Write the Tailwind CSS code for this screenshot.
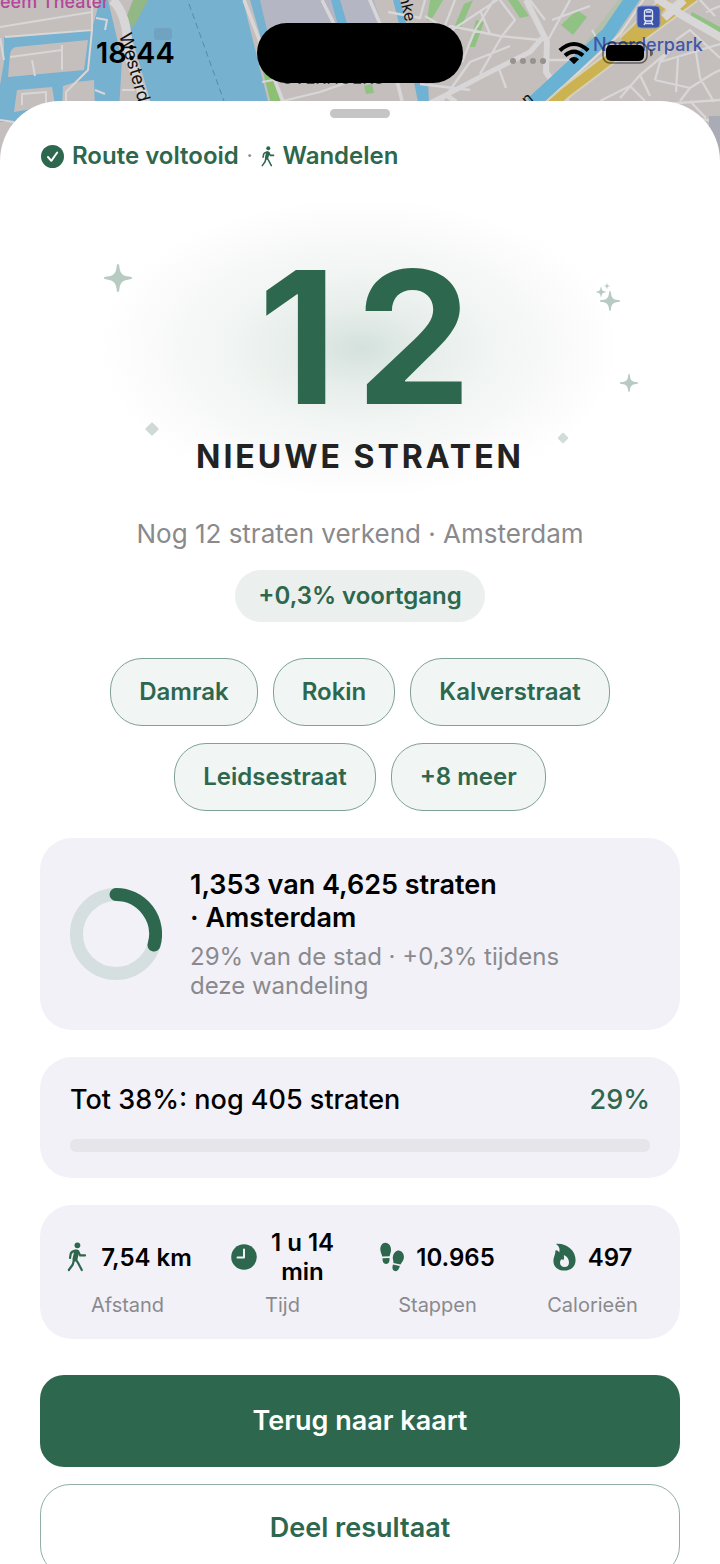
<!DOCTYPE html>
<html lang="nl">
<head>
    <meta charset="UTF-8">
    <meta name="viewport" content="width=device-width, initial-scale=1.0">
    <title>Route voltooid</title>
    <script src="https://cdn.jsdelivr.net/npm/@tailwindcss/browser@4"></script>
</head>
<body class="bg-white font-['Inter','Liberation_Sans',sans-serif] text-black">
    <svg class="hidden" aria-hidden="true">
        <symbol id="walk" viewBox="0 0 20 30">
            <circle cx="10.400" cy="3.300" r="2.900" fill="currentColor"/>
            <path d="M9.600 10L8 17" fill="none" stroke="currentColor" stroke-width="5" stroke-linecap="round"/>
            <path d="M8.600 8.600Q4.600 9.400 3.800 11.500L3 16M11.200 9.500L13.200 13.400H18M8.600 17L11 20.800L14.800 28M6.800 18.500L5.800 22.500L1.800 28" fill="none" stroke="currentColor" stroke-width="2.200" stroke-linecap="round" stroke-linejoin="round"/>
        </symbol>
        <symbol id="spark" viewBox="0 0 28 28">
            <path d="M14 0C15 0 15.2 1 15.4 3C16.2 9.500 18.500 11.800 25 12.600C27 12.800 28 13 28 14C28 15 27 15.200 25 15.400C18.500 16.200 16.200 18.500 15.400 25C15.200 27 15 28 14 28C13 28 12.800 27 12.600 25C11.800 18.500 9.500 16.200 3 15.400C1 15.200 0 15 0 14C0 13 1 12.800 3 12.600C9.500 11.800 11.800 9.500 12.600 3C12.800 1 13 0 14 0Z" fill="currentColor"/>
        </symbol>
    </svg>

    <div class="relative h-screen overflow-hidden">
        <!-- kaart -->
        <svg class="absolute inset-x-0 top-0 w-full h-[170px]" viewBox="0 0 720 170" preserveAspectRatio="xMidYMin slice" font-family="Inter, Liberation Sans, sans-serif">
            <rect width="720" height="170" fill="#77b1d0"/>
            <g fill="#c4bfbd">
                <path d="M0 0H100L92 29L5 37L0 38Z"/>
                <path d="M10 54Q11 48 16 47L88 40L84 70L8 77Z"/>
                <path d="M17 90L52 87L55 105L14 112Z"/>
                <path d="M63 86L76 82L94 80L95 110H62Z"/>
                <path d="M0 38L4 36L4 62L0 85Z"/>
                <path d="M0 122H30V170H0Z"/>
                <path d="M108 0H140L128 24L139 62L153 110H119L122 60Z"/>
                <path d="M243 0H720V170H285Z"/>
            </g>
            <path d="M133 0H148L133 28L126 18Z" fill="#93b885"/>
            <path d="M258 0H374L384 30L345 30L270 45Z" fill="#b4b6c4"/>
            <path d="M250 0H260L274 60L267 60Z" fill="#77b1d0"/>
            <path d="M262 68L270 72L283 108H272Z" fill="#8cc173"/>
            <path d="M331 0H340L352 40H342ZM393 0H400L416 60L428 82L429 102H418L414 82Z" fill="#70b2d4"/>
            <g fill="#8fc283">
                <path d="M430 0H443L433 17L427 21Z"/>
                <path d="M464 4L473 0L460 30L453 30Z"/>
                <path d="M476 20L484 22L475 47L469 47Z"/>
                <path d="M508 0H518L529 16L520 18Z"/>
                <path d="M577 10L587 17L573 35L561 25Z"/>
                <path d="M692 12L720 27V35L690 18Z"/>
                <path d="M364 86L372 84L374 93L366 94Z"/>
                <path d="M618 0H628L600 32L580 50Z" opacity=".3"/>
            </g>
            <!-- straten -->
            <g fill="none" stroke="#d8d6d7" stroke-linejoin="round">
                <path stroke-width="2" d="M0 27L92 12M92 0V30L88 70L66 92V101M5 37L92 30M10 57L62 50M62 45V70M32 60L35 76M22 105V94L46 92V105M0 120L14 122M0 38L4 60M122 90H135M96 18L107 20L105 30M95 90L105 94M262 82L330 70M283 101L320 92L360 78"/>
                <path stroke-width="9" d="M112 0Q122 8 126 28L130 60L146 104"/>
                <path stroke-width="3.500" d="M369 -2L387 40L402 101M322 0L334 24M244 0L284 104"/>
                <path stroke-width="2.300" d="M404 30L440 38L455 0M412 60L450 26L500 36L540 40M440 38L500 -2M462 62L475 30L494 0M480 74L502 36L515 20L500 0M498 66L506 88M420 84L470 90M440 104L470 62L510 46M425 16L455 34M545 60L575 60M548 40L570 0M552 20L590 6M575 60L600 44L592 30M388 12L420 18L425 0M490 34L480 10M655 80L690 88L712 74L720 70M655 80L660 62L720 44M660 62L670 50L640 75L620 98M690 88L680 101M678 58L676 92M696 52L700 78L714 102M640 75L650 96M600 101L630 86L645 101M700 0L715 16M706 12L720 6M676 40L690 30L720 58M720 100L664 104M655 112L720 122M690 101L706 118M530 0L545 20"/>
                <path stroke-width="6" d="M526 0L547 42L546 72L568 104"/>
                <path stroke-width="5" d="M542 38L530 52L488 73L446 95L428 104M445 94L456 102"/>
            </g>
            <path d="M634 -4L608 34L532 104" fill="none" stroke="#69b2d4" stroke-width="14"/>
            <path d="M646 -4L620 34L548 101" fill="none" stroke="#dddbd3" stroke-width="2"/>
            <path d="M668 0L624 42M694 -4L640 36L566 92L548 108" fill="none" stroke="#d5d1bb" stroke-width="14"/>
            <path d="M668 0L624 42M694 -4L640 36L566 92L548 108" fill="none" stroke="#ccb250" stroke-width="10"/>
            <path d="M656 -2L682 15L722 38M664 18L684 0" fill="none" stroke="#d8d6d7" stroke-width="8"/>
            <path d="M709 116H720V170H709Z" fill="#a9abb7"/>
            <path d="M189 4L224 101" stroke="#5989a4" stroke-width="1" stroke-dasharray="6 4"/>
            <rect x="154" y="28" width="18" height="12" rx="3" fill="#6d9db8" opacity=".7"/>

            <text x="0" y="8" font-size="18" font-weight="500" fill="#b3489b">eem Theater</text>
            <text transform="translate(119 35) rotate(74)" font-size="18" fill="#111">Westerdok</text>
            <text transform="translate(399 -4) rotate(76)" font-size="16" fill="#111">nke</text>
            <text x="281" y="84" font-size="17" fill="#3f465c">OVERHOEKS</text>
            <text transform="translate(527 106) rotate(-40)" font-size="16" fill="#111">n</text>
            <text x="593" y="51" font-size="18" font-weight="500" fill="#4057a9">Noorderpark</text>

            <rect x="637" y="6" width="23" height="22" rx="4" fill="#3a52aa" stroke="#8393cc"/>
            <path d="M644.500 19V12Q644.500 9.500 648.500 9.500Q652.500 9.500 652.500 12V19Q652.500 21 650.500 21H646.500Q644.500 21 644.500 19ZM646 12H651M644.500 16H652.500M646 21L644 25M651 21L653 25M645 23.500H652" fill="none" stroke="#dfe4f4" stroke-width="1.400"/>
        </svg>

        <!-- statusbalk -->
        <header class="relative h-[101px] flex items-center justify-between pl-24 pr-[66px] pb-1">
            <time class="pt-2 text-[29px] leading-8 font-semibold">18:44</time>
            <div class="absolute left-1/2 top-[23px] -translate-x-1/2 w-[206px] h-[60px] rounded-full bg-black"></div>
            <div class="flex items-center gap-3 pt-2">
                <svg class="w-9 h-6" viewBox="0 0 36 24" fill="#96928f">
                    <circle cx="3" cy="20" r="3"/><circle cx="13" cy="20" r="3"/><circle cx="23" cy="20" r="3"/><circle cx="33" cy="20" r="3"/>
                </svg>
                <svg class="w-8 h-6" viewBox="0 0 32 24" fill="none" stroke="#000" stroke-width="4">
                    <path d="M1.800 9.500Q16 -3.500 30.200 9.500M7 14.600Q16 6.500 25 14.600"/>
                    <path d="M11 18.300Q16 13.800 21 18.300L16 23.200Z" fill="#000" stroke="none"/>
                </svg>
                <svg class="w-[52px] h-6" viewBox="0 0 52 24">
                    <rect x="1" y="2" width="44" height="20" rx="7" fill="none" stroke="#000" stroke-opacity=".5" stroke-width="1.500"/>
                    <rect x="4" y="4" width="38" height="16" rx="5"/>
                    <path d="M48 8.500Q51 9.500 51 12Q51 14.500 48 15.500Z" opacity=".5"/>
                </svg>
            </div>
        </header>

        <main class="relative rounded-t-[60px] bg-white px-10 pt-2 pb-10">
            <div class="mx-auto w-[60px] h-[9px] rounded-full bg-[#c5c5c6]"></div>

            <div class="mt-5 flex items-center h-9 text-2xl font-semibold text-[#2d674d]">
                <svg class="w-[25px] h-[25px] mr-[7px]" viewBox="0 0 25 25">
                    <circle cx="12.500" cy="12.500" r="11.500" fill="currentColor"/>
                    <path d="M8 13L11.300 16.800L17.200 8.500" fill="none" stroke="#fff" stroke-width="2" stroke-linecap="round" stroke-linejoin="round"/>
                </svg>
                <span>Route voltooid</span>
                <span class="mx-2 text-lg text-[#8a8a8e]">·</span>
                <svg class="w-[14px] h-[21px] mr-2"><use href="#walk"/></svg>
                <span>Wandelen</span>
            </div>

            <section class="relative mt-6 -mx-10 h-[300px] flex flex-col items-center bg-[radial-gradient(260px_150px_at_50%_50%,#d4e1dc_0%,#e6edea_25%,#f1f5f3_50%,#f9faf9_78%,#ffffff_100%)] text-[#2d674d]">
                <p class="mt-[59px] pl-7 text-[184px] leading-[160px] font-bold tracking-widest">12</p>
                <h1 class="mt-5 text-[32px] leading-10 font-bold tracking-[3px] text-[#222222]">NIEUWE STRATEN</h1>
                <svg class="absolute left-[104px] top-[66px] w-7 h-7 text-[#b7cbc2]"><use href="#spark"/></svg>
                <svg class="absolute right-[100px] top-[85px] w-6 h-7 text-[#b7cbc2]" viewBox="0 0 24 28">
                    <use href="#spark" x="4" y="8" width="20" height="20"/>
                    <use href="#spark" x="0" y="4" width="10" height="10"/>
                    <use href="#spark" x="8" y="0" width="6" height="6"/>
                </svg>
                <svg class="absolute right-[82px] top-[176px] w-[18px] h-[18px] text-[#b7cbc2]"><use href="#spark"/></svg>
                <span class="absolute left-[147px] top-[226px] w-[10px] h-[10px] rotate-45 rounded-[1px] bg-[#cfdad5]"></span>
                <span class="absolute right-[153px] top-[236px] w-2 h-2 rotate-45 rounded-[1px] bg-[#d2ddd8]"></span>
            </section>

            <p class="mt-[18px] text-center text-[26px] leading-9 text-[#8a8a8d]">Nog 12 straten verkend · Amsterdam</p>
            <p class="mx-auto mt-[18px] w-fit rounded-full bg-[#ebefee] px-[23px] text-2xl leading-[52px] font-semibold text-[#2d674d]">+0,3% voortgang</p>

            <ul class="mt-9 flex flex-wrap justify-center gap-x-[15px] gap-y-[17px] px-10 text-2xl leading-[66px] font-semibold text-[#2d674d]">
                <li class="rounded-[32px] border border-[#7fa292] bg-[#f1f5f3] px-7">Damrak</li>
                <li class="rounded-[32px] border border-[#7fa292] bg-[#f1f5f3] px-7">Rokin</li>
                <li class="rounded-[32px] border border-[#7fa292] bg-[#f1f5f3] px-7">Kalverstraat</li>
                <li class="rounded-[32px] border border-[#7fa292] bg-[#f1f5f3] px-7">Leidsestraat</li>
                <li class="rounded-[32px] border border-[#7fa292] bg-[#f1f5f3] px-7">+8 meer</li>
            </ul>

            <section class="mt-[27px] flex items-center rounded-[32px] bg-[#f2f1f7] px-[30px] py-[30px]">
                <svg class="w-[92px] h-[92px] shrink-0" viewBox="0 0 92 92" fill="none" stroke-width="13">
                    <circle cx="46" cy="46" r="39.500" stroke="#d6dfdf"/>
                    <path d="M46 6.500A39.500 39.500 0 0 1 84 57" stroke="#2d674d" stroke-linecap="round"/>
                </svg>
                <div class="ml-7 max-w-[380px]">
                    <h2 class="text-[27px] leading-[33px] font-semibold">1,353 van 4,625 straten<br>· Amsterdam</h2>
                    <p class="mt-2 text-2xl leading-[29px] text-[#8a8a8e]">29% van de stad · +0,3% tijdens deze wandeling</p>
                </div>
            </section>

            <section class="mt-[27px] rounded-[32px] bg-[#f2f1f7] px-[30px] pt-[26px] pb-[26px]">
                <div class="flex justify-between text-[27px] leading-[34px] font-medium">
                    <h2 id="goal">Tot 38%: nog 405 straten</h2>
                    <span class="text-[#2d674d]">29%</span>
                </div>
                <div class="mt-[22px] h-[13px] rounded-md bg-[#e5e5ea]" role="progressbar" aria-labelledby="goal" aria-valuenow="29" aria-valuemin="0" aria-valuemax="38"></div>
            </section>

            <dl class="mt-[27px] grid grid-cols-4 rounded-[32px] bg-[#f2f1f7] px-[10px] pt-[23px] pb-[19px] text-center">
                <div class="flex flex-col-reverse">
                    <dt class="mt-1 text-xl leading-[30px] text-[#8a8a8e]">Afstand</dt>
                    <dd class="flex h-[58px] items-center justify-center gap-[14px] pl-1 text-2xl leading-[29px] font-semibold">
                        <svg class="w-5 h-[30px] shrink-0 text-[#2d674d]"><use href="#walk"/></svg>
                        <span>7,54 km</span>
                    </dd>
                </div>
                <div class="flex flex-col-reverse">
                    <dt class="mt-1 text-xl leading-[30px] text-[#8a8a8e]">Tijd</dt>
                    <dd class="flex h-[58px] items-center justify-center gap-[14px] text-2xl leading-[29px] font-semibold">
                        <svg class="w-[26px] h-[26px] shrink-0" viewBox="0 0 26 26">
                            <circle cx="13" cy="13" r="12.800" fill="#2d674d"/>
                            <path d="M13 5.500V13.500H6.500" fill="none" stroke="#f2f1f7" stroke-width="2" stroke-linecap="round" stroke-linejoin="round"/>
                        </svg>
                        <span>1 u 14<br>min</span>
                    </dd>
                </div>
                <div class="flex flex-col-reverse">
                    <dt class="mt-1 text-xl leading-[30px] text-[#8a8a8e]">Stappen</dt>
                    <dd class="flex h-[58px] items-center justify-center gap-3 text-2xl leading-[29px] font-semibold">
                        <svg class="w-6 h-[30px] shrink-0" viewBox="0 0 24 30" fill="#2d674d">
                            <path d="M5.500 0.800C9 0.800 11.300 4.500 11 8.500C10.900 10.700 10 12 9.600 14.300L2.200 14.600C2 12.500 0.700 11 0.400 8.300C0 4.200 2 0.800 5.500 0.800Z"/>
                            <path d="M2.500 16.200L9.500 15.900C9.800 19.500 8.800 21.800 6.200 21.900C3.600 22 2.400 20 2.500 16.200Z"/>
                            <path d="M19.600 8.700C23 9.400 24.500 13 23.700 16.700C23.100 19.400 21.300 20.500 20.500 22.500L13.400 21C13.600 18.500 12.400 17 12.900 14.500C13.700 10.700 16.500 8 19.600 8.700Z"/>
                            <path d="M13 22.600L19.800 24C19 27.800 17.300 29.600 14.900 29.100C12.300 28.500 11.900 26 13 22.600Z"/>
                        </svg>
                        <span>10.965</span>
                    </dd>
                </div>
                <div class="flex flex-col-reverse">
                    <dt class="mt-1 text-xl leading-[30px] text-[#8a8a8e]">Calorieën</dt>
                    <dd class="flex h-[58px] items-center justify-center gap-3 text-2xl leading-[29px] font-semibold">
                        <svg class="w-[23px] h-7 shrink-0" viewBox="0 0 23 28">
                            <path d="M3.800 0.700C14 0.300 22.600 7.500 22.600 17C22.600 23.600 18 27.600 11.500 27.600C4.800 27.600 0.400 23.800 0.400 18C0.400 14.300 2 12.300 2.300 9.700C2.400 8.500 2.200 7.600 2.600 7.400C3.600 7 5.200 7.800 6.200 9.400C7.300 6.200 6.200 3.400 3.600 1.500C3.100 1.100 3.200 0.700 3.800 0.700Z" fill="#2d674d"/>
                            <path d="M11.300 12.200C14.500 13.500 16 16.500 16 19.500C16 22.500 14.200 24 11.600 24C8.900 24 7 22.500 7 19.800C7 18 7.800 16.600 8.700 16.200C9.300 16.100 9.800 16.700 10.200 17.300C11.200 15.800 11.200 14.300 10.800 12.900C10.700 12.300 10.900 12 11.300 12.200Z" fill="#f2f1f7"/>
                        </svg>
                        <span>497</span>
                    </dd>
                </div>
            </dl>

            <button type="button" class="mt-9 block w-full h-[92px] rounded-3xl bg-[#2d674d] text-[27px] font-semibold text-white">Terug naar kaart</button>
            <button type="button" class="mt-[17px] block w-full h-[92px] rounded-[30px] border border-[#93afa3] bg-white pb-1 text-[27px] font-semibold text-[#2d674d]">Deel resultaat</button>
        </main>
    </div>
</body>
</html>
